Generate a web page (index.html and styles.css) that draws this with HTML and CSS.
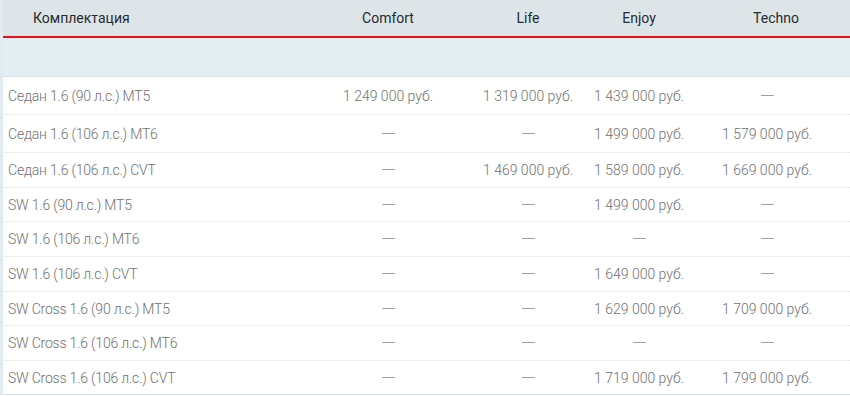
FILE: index.html
```html
<!DOCTYPE html>
<html lang="ru">
<head>
<meta charset="utf-8">
<link rel="stylesheet" href="styles.css">
</head>
<body>
<div class="table">
  <div class="row head">
    <div class="c first">Комплектация</div>
    <div class="c">Comfort</div>
    <div class="c">Life</div>
    <div class="c">Enjoy</div>
    <div class="c techno">Techno</div>
  </div>
  <div class="band"></div>
  <div class="body">
    <div class="row tall"><div class="c first">Седан 1.6 (90 л.с.) MT5</div><div class="c">1 249 000 руб.</div><div class="c">1 319 000 руб.</div><div class="c">1 439 000 руб.</div><div class="c"><span class="dash">—</span></div></div>
    <div class="row tall"><div class="c first">Седан 1.6 (106 л.с.) MT6</div><div class="c"><span class="dash">—</span></div><div class="c"><span class="dash">—</span></div><div class="c">1 499 000 руб.</div><div class="c">1 579 000 руб.</div></div>
    <div class="row"><div class="c first">Седан 1.6 (106 л.с.) CVT</div><div class="c"><span class="dash">—</span></div><div class="c">1 469 000 руб.</div><div class="c">1 589 000 руб.</div><div class="c">1 669 000 руб.</div></div>
    <div class="row short"><div class="c first">SW 1.6 (90 л.с.) MT5</div><div class="c"><span class="dash">—</span></div><div class="c"><span class="dash">—</span></div><div class="c">1 499 000 руб.</div><div class="c"><span class="dash">—</span></div></div>
    <div class="row"><div class="c first">SW 1.6 (106 л.с.) MT6</div><div class="c"><span class="dash">—</span></div><div class="c"><span class="dash">—</span></div><div class="c"><span class="dash">—</span></div><div class="c"><span class="dash">—</span></div></div>
    <div class="row"><div class="c first">SW 1.6 (106 л.с.) CVT</div><div class="c"><span class="dash">—</span></div><div class="c"><span class="dash">—</span></div><div class="c">1 649 000 руб.</div><div class="c"><span class="dash">—</span></div></div>
    <div class="row short"><div class="c first">SW Cross 1.6 (90 л.с.) MT5</div><div class="c"><span class="dash">—</span></div><div class="c"><span class="dash">—</span></div><div class="c">1 629 000 руб.</div><div class="c">1 709 000 руб.</div></div>
    <div class="row"><div class="c first">SW Cross 1.6 (106 л.с.) MT6</div><div class="c"><span class="dash">—</span></div><div class="c"><span class="dash">—</span></div><div class="c"><span class="dash">—</span></div><div class="c"><span class="dash">—</span></div></div>
    <div class="row short last"><div class="c first">SW Cross 1.6 (106 л.с.) CVT</div><div class="c"><span class="dash">—</span></div><div class="c"><span class="dash">—</span></div><div class="c">1 719 000 руб.</div><div class="c">1 799 000 руб.</div></div>
  </div>
</div>
</body>
</html>
```
FILE: styles.css
```css
html, body {
  margin: 0;
  padding: 0;
  background: #ffffff;
}
body {
  font-family: Roboto, "Liberation Sans", sans-serif;
  width: 850px;
  height: 396px;
  overflow: hidden;
}
.table {
  border-left: 3px solid #e2ebef;
}
.row {
  display: grid;
  grid-template-columns: 311px 148px 132px 90px 166px;
  align-items: center;
}
.c {
  text-align: center;
  white-space: nowrap;
}
.head {
  height: 36px;
  background: #dde5e9;
  border-bottom: 2px solid #e3151b;
  color: #262b30;
  font-size: 14px;
  font-weight: 400;
}
.head .first {
  text-align: left;
  padding-left: 30px;
}
.head .techno {
  padding-left: 18px;
}
.band {
  height: 38px;
  background: #e4edf1;
  border-bottom: 1px solid #d5e2e8;
}
.body .row {
  height: 34px;
  border-bottom: 1px dotted #d8e1e5;
  color: #717171;
  font-size: 14px;
  font-weight: 300;
}
.body .row.tall {
  height: 36px;
  padding-top: 1px;
}
.body .row.short {
  height: 33px;
}
.body .row.last {
  border-bottom: 1px solid #d8e1e5;
}
.body .first {
  text-align: left;
  padding-left: 5px;
  letter-spacing: -0.2px;
}
.dash {
  display: inline-block;
  transform: scaleX(1.4);
  color: #8a8a8a;
}
```
